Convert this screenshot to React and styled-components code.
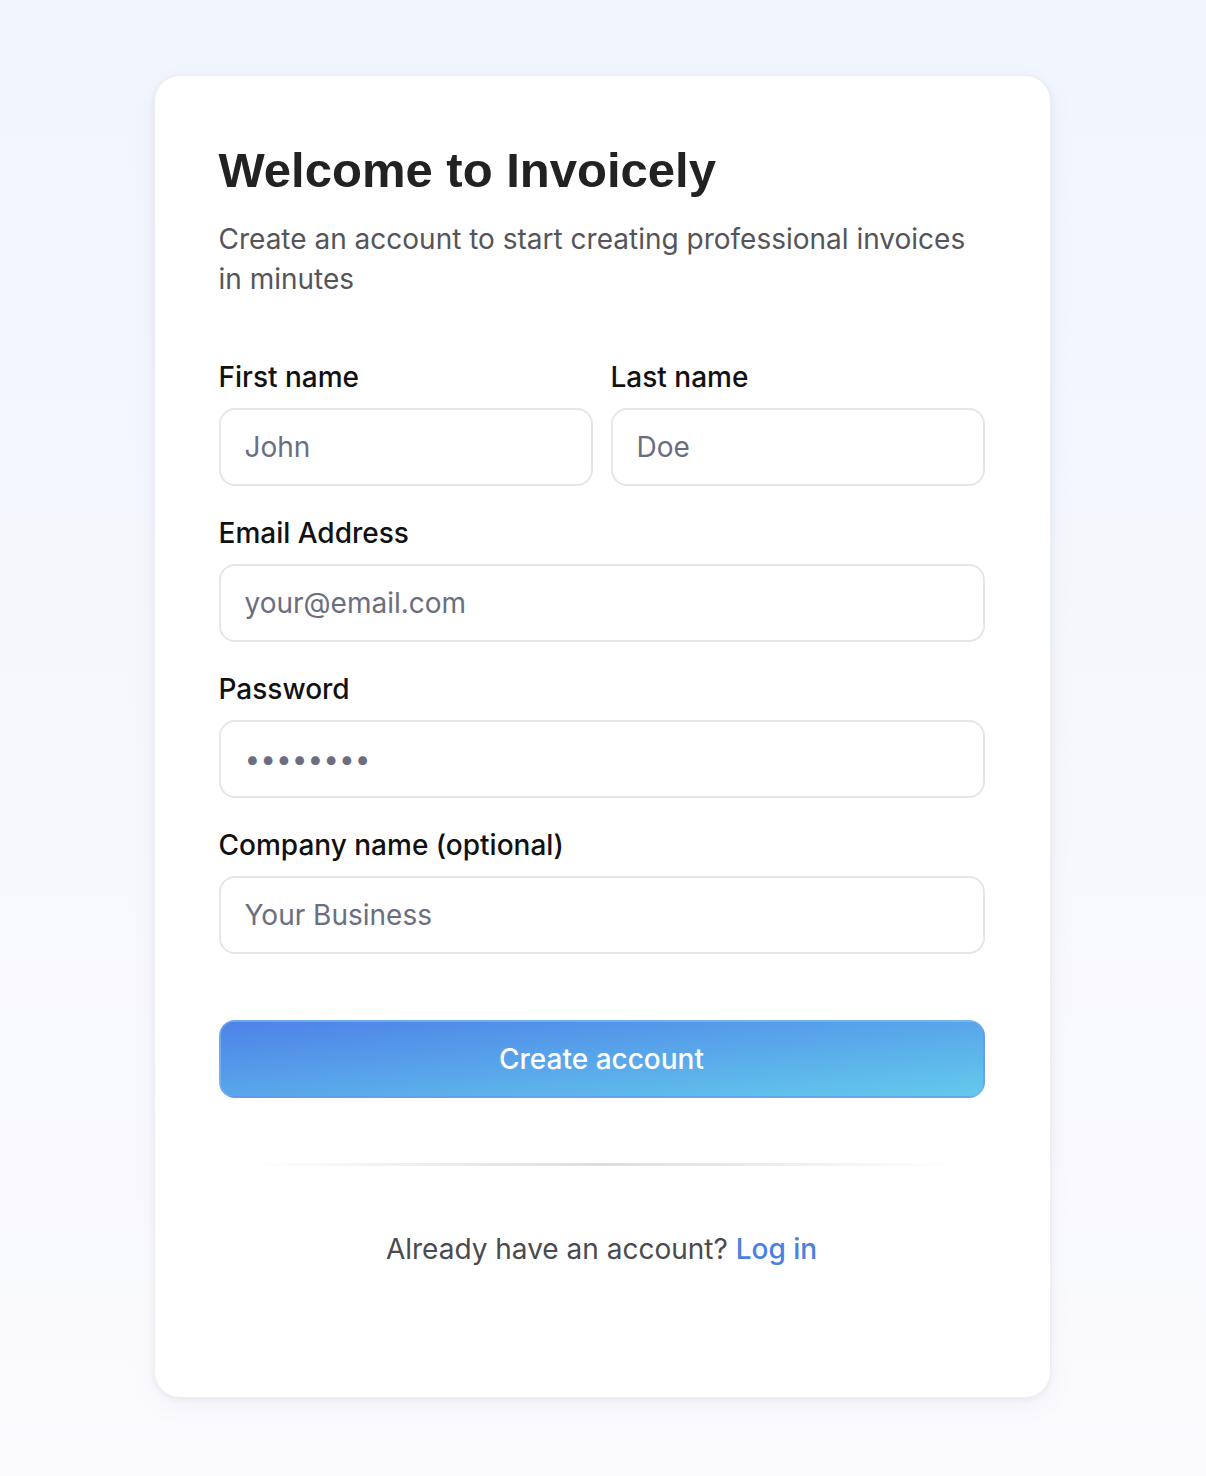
import styled, { createGlobalStyle } from "styled-components";

const GlobalStyle = createGlobalStyle`
  html, body {
    margin: 0;
    padding: 0;
  }
  body {
    min-height: 1476px;
    background: linear-gradient(180deg, #f1f5fd 0%, #f7f8fd 55%, #fbfbfe 100%);
    font-family: Inter, "Noto Sans", sans-serif;
  }
`;

function App() {
  return (
    <Page>
      <GlobalStyle />
      <Card>
        <Title>Welcome to Invoicely</Title>
        <Subtitle>
          Create an account to start creating professional invoices in minutes
        </Subtitle>

        <Form onSubmit={(e) => e.preventDefault()}>
          <Row>
            <Field>
              <Label>First name</Label>
              <Input placeholder="John" />
            </Field>
            <Field>
              <Label>Last name</Label>
              <Input placeholder="Doe" />
            </Field>
          </Row>
          <Field>
            <Label>Email Address</Label>
            <Input placeholder="your@email.com" />
          </Field>
          <Field>
            <Label>Password</Label>
            <Input type="password" defaultValue="password" />
          </Field>
          <Field>
            <Label>Company name (optional)</Label>
            <Input placeholder="Your Business" />
          </Field>
          <SubmitButton type="submit">Create account</SubmitButton>
        </Form>

        <Divider />

        <Footer>
          Already have an account? <LoginLink href="#">Log in</LoginLink>
        </Footer>
      </Card>
    </Page>
  );
}

export default App;

const Page = styled.div`
  display: flex;
  justify-content: center;
  padding: 75px 2px 79px 0;
`;

const Card = styled.div`
  width: 897px;
  box-sizing: border-box;
  background: #ffffff;
  border: 1px solid #eceef3;
  border-radius: 26px;
  padding: 62px 65px 128px 64px;
  box-shadow: 0 2px 6px rgba(30, 40, 80, 0.06), 0 8px 30px rgba(30, 40, 80, 0.04);
`;

const Title = styled.h1`
  margin: 0;
  font-family: "Liberation Sans", Arial, sans-serif;
  font-weight: 700;
  font-size: 49px;
  line-height: 64px;
  color: #222222;
`;

const Subtitle = styled.p`
  margin: 17px 0 0;
  font-size: 28px;
  line-height: 40px;
  color: #555559;
`;

const Form = styled.form`
  display: flex;
  flex-direction: column;
  gap: 31px;
  margin-top: 62px;
`;

const Row = styled.div`
  display: grid;
  grid-template-columns: minmax(0, 1fr) minmax(0, 1fr);
  gap: 18px;
`;

const Field = styled.div`
  display: flex;
  flex-direction: column;
  gap: 15px;
  min-width: 0;
`;

const Label = styled.label`
  font-size: 28px;
  line-height: 32px;
  font-weight: 500;
  color: #111111;
`;

const Input = styled.input`
  width: 100%;
  min-width: 0;
  height: 78px;
  box-sizing: border-box;
  border: 2px solid #e6e6ea;
  border-radius: 16px;
  padding: 0 24px;
  font-family: Inter, "Noto Sans", sans-serif;
  font-size: 28px;
  color: #6b6e80;
  background: #ffffff;
  outline: none;

  &::placeholder {
    color: #6b6e80;
  }
`;

const SubmitButton = styled.button`
  margin-top: 35px;
  height: 78px;
  border: 2px solid rgba(120, 170, 240, 0.55);
  border-radius: 16px;
  background: linear-gradient(to bottom right, #4e82e8 0%, #63caec 100%);
  color: #ffffff;
  font-family: Inter, "Noto Sans", sans-serif;
  font-size: 28px;
  font-weight: 500;
  cursor: pointer;
`;

const Divider = styled.div`
  height: 3px;
  margin: 65px 30px 0;
  background: linear-gradient(90deg, rgba(220, 220, 226, 0) 0%, #dcdce2 50%, rgba(220, 220, 226, 0) 100%);
`;

const Footer = styled.p`
  margin: 63px 0 0;
  text-align: center;
  font-size: 28px;
  line-height: 40px;
  color: #4a4a4f;
`;

const LoginLink = styled.a`
  color: #4b80e0;
  font-weight: 500;
  text-decoration: none;
`;
